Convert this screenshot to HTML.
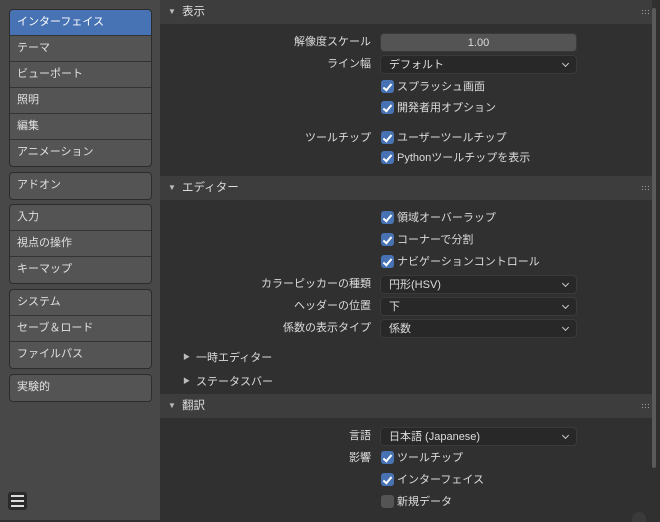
<!DOCTYPE html>
<html><head><meta charset="utf-8"><style>
*{margin:0;padding:0;box-sizing:border-box}
body{width:660px;height:520px;overflow:hidden;background:#303030;font-family:"Liberation Sans","Noto Sans CJK JP",sans-serif;font-size:11px;color:#dcdcdc;position:relative}
.side{position:absolute;left:0;top:0;width:160px;height:520px;background:#484848}
.grp{position:absolute;left:9px;width:143px;border:1px solid #2c2c2c;border-radius:4px;overflow:hidden;background:#545454}
.it{height:26px;line-height:24px;padding-left:7px;border-bottom:1px solid #333;color:#e0e0e0}
.it:last-child{border-bottom:none}
.sel{background:#4772b3;color:#fff}
.hdr{position:absolute;left:160px;width:492px;height:24px;background:#3d3d3d;line-height:24px;padding-left:22px;font-size:11.5px}
.hdr:before{content:"▼";position:absolute;left:8px;font-size:8px;color:#bbb}
.dots{position:absolute;right:3px;top:9px;width:8px;height:6px;background-image:radial-gradient(#999 0.7px,transparent 0.8px);background-size:3px 3px}
.lbl{position:absolute;right:289px;height:18px;line-height:18px;text-align:right;white-space:nowrap}
.fld{position:absolute;left:380px;width:197px;height:19px;border-radius:4px;line-height:19px;padding-left:8px}
.num{background:#545454;text-align:center;padding:0;border:1px solid #3a3a3a}
.dd{background:#282828;border:1px solid #3a3a3a}
.dd:after{content:"";position:absolute;right:8px;top:5px;width:4px;height:4px;border-right:1.3px solid #ccc;border-bottom:1.3px solid #ccc;transform:rotate(45deg)}
.cb{position:absolute;left:381px;height:14px;line-height:14px;padding-left:16px;white-space:nowrap}
.cb:before{content:"";position:absolute;left:0;top:0;width:13px;height:13px;border-radius:3px;background:#4772b3}
.cb:after{content:"";position:absolute;left:4px;top:2px;width:3px;height:7px;border-right:2px solid #fff;border-bottom:2px solid #fff;transform:rotate(40deg)}
.off:before{background:#545454}.off:after{display:none}
.sub{position:absolute;left:196px;line-height:14px}
.sub:before{content:"▶";position:absolute;left:-13px;font-size:7px;color:#bbb}
</style></head><body>
<div class="side">
<div class="grp" style="top:9px"><div class="it sel">インターフェイス</div><div class="it">テーマ</div><div class="it">ビューポート</div><div class="it">照明</div><div class="it">編集</div><div class="it">アニメーション</div></div>
<div class="grp" style="top:172px"><div class="it">アドオン</div></div>
<div class="grp" style="top:204px"><div class="it">入力</div><div class="it">視点の操作</div><div class="it">キーマップ</div></div>
<div class="grp" style="top:289px"><div class="it">システム</div><div class="it">セーブ＆ロード</div><div class="it">ファイルパス</div></div>
<div class="grp" style="top:374px"><div class="it">実験的</div></div>
<div style="position:absolute;left:8px;top:492px;width:19px;height:18px;background:#2a2a2a;border-radius:3px"><div style="position:absolute;left:3px;top:3px;width:13px;height:2px;background:#ddd;box-shadow:0 5px #ddd,0 10px #ddd"></div></div>
</div>
<div style="position:absolute;left:652px;top:8px;width:4px;height:460px;background:#5a5a5a;border-radius:2px"></div>

<div class="hdr" style="top:0">表示<div class="dots"></div></div>
<div class="lbl" style="top:33px">解像度スケール</div><div class="fld num" style="top:33px">1.00</div>
<div class="lbl" style="top:55px">ライン幅</div><div class="fld dd" style="top:55px">デフォルト</div>
<div class="cb" style="top:80px">スプラッシュ画面</div>
<div class="cb" style="top:101px">開発者用オプション</div>
<div class="lbl" style="top:129px">ツールチップ</div>
<div class="cb" style="top:131px">ユーザーツールチップ</div>
<div class="cb" style="top:151px">Pythonツールチップを表示</div>

<div class="hdr" style="top:176px">エディター<div class="dots"></div></div>
<div class="cb" style="top:211px">領域オーバーラップ</div>
<div class="cb" style="top:233px">コーナーで分割</div>
<div class="cb" style="top:255px">ナビゲーションコントロール</div>
<div class="lbl" style="top:275px">カラーピッカーの種類</div><div class="fld dd" style="top:275px">円形(HSV)</div>
<div class="lbl" style="top:297px">ヘッダーの位置</div><div class="fld dd" style="top:297px">下</div>
<div class="lbl" style="top:319px">係数の表示タイプ</div><div class="fld dd" style="top:319px">係数</div>
<div class="sub" style="top:351px">一時エディター</div>
<div class="sub" style="top:375px">ステータスバー</div>

<div class="hdr" style="top:394px">翻訳<div class="dots"></div></div>
<div class="lbl" style="top:427px">言語</div><div class="fld dd" style="top:427px">日本語 (Japanese)</div>
<div class="lbl" style="top:449px">影響</div>
<div class="cb" style="top:451px">ツールチップ</div>
<div class="cb" style="top:473px">インターフェイス</div>
<div class="cb off" style="top:495px">新規データ</div>
<div style="position:absolute;left:632px;top:512px;width:14px;height:10px;background:#3a3a3a;border-radius:7px 7px 0 0"></div>
</body></html>
